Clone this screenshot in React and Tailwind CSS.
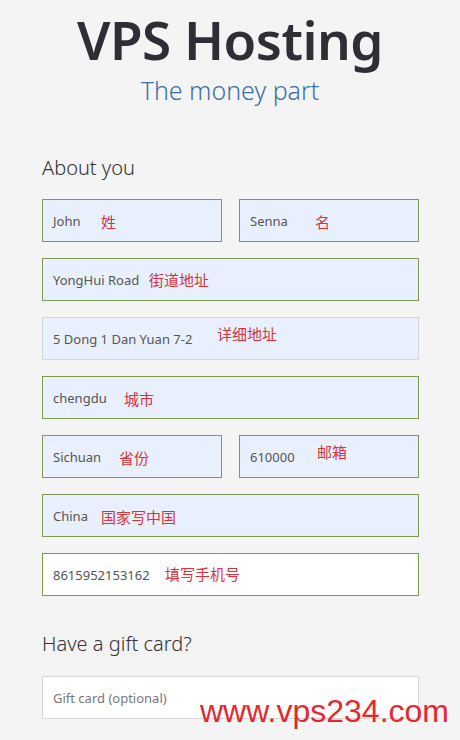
const fields = [
  [
    { value: 'John', note: '姓', left: 'left-[58px]', top: 'top-[11px]' },
    { value: 'Senna', note: '名', left: 'left-[75px]', top: 'top-[11px]' },
  ],
  [{ value: 'YongHui Road', note: '街道地址', left: 'left-[106px]', top: 'top-[10px]' }],
  [{ value: '5 Dong 1 Dan Yuan 7-2', note: '详细地址', left: 'left-[174px]', top: 'top-[5px]', plain: true }],
  [{ value: 'chengdu', note: '城市', left: 'left-[81px]', top: 'top-[11px]' }],
  [
    { value: 'Sichuan', note: '省份', left: 'left-[76px]', top: 'top-[11px]' },
    { value: '610000', note: '邮箱', left: 'left-[77px]', top: 'top-[5px]' },
  ],
  [{ value: 'China', note: '国家写中国', left: 'left-[58px]', top: 'top-[11px]' }],
  [{ value: '8615952153162', note: '填写手机号', left: 'left-[122px]', top: 'top-[9px]', white: true }],
];

function Field({ field }) {
  const box = field.white
    ? 'bg-white border-[#7c9a52]'
    : field.plain
    ? 'bg-[#e8f0fe] border-[#d6d6d6]'
    : 'bg-[#e8f0fe] border-[#7c9a52]';
  return (
    <div className={`relative flex-1 h-[43px] border ${box} flex items-center px-[10px]`}>
      <span className="text-[13px] text-[#555] pt-[2px]">{field.value}</span>
      <span
        className={`absolute ${field.left} ${field.top} text-[15px] text-[#d9343b] font-['Noto_Sans_CJK_SC',sans-serif]`}
      >
        {field.note}
      </span>
    </div>
  );
}

export default function App() {
  return (
    <div className="relative min-h-[740px] bg-[#f4f4f4] font-['Noto_Sans','Noto_Sans_CJK_SC',sans-serif] overflow-hidden">
      <header className="flex flex-col items-center pt-[6px]">
        <h1 className="text-[53px] leading-[68px] font-semibold tracking-[-0.5px] text-[#2e2f36]">VPS Hosting</h1>
        <p className="text-[25px] leading-[32px] font-light text-[#3e6fa6]">The money part</p>
      </header>

      <section className="pl-[42px] pr-[41px] pt-[49px]">
        <h2 className="text-[20px] leading-[26px] font-light text-[#333]">About you</h2>
        <div className="mt-[18px] flex flex-col gap-[16px]">
          {fields.map((row, i) => (
            <div key={i} className="flex gap-[17px]">
              {row.map((f) => (
                <Field key={f.value} field={f} />
              ))}
            </div>
          ))}
        </div>

        <h2 className="mt-[35px] text-[20px] leading-[26px] font-light text-[#333]">Have a gift card?</h2>
        <div className="mt-[19px] h-[43px] bg-white border border-[#d6d6d6] flex items-center px-[10px]">
          <span className="text-[13px] text-[#777] pt-[2px]">Gift card (optional)</span>
        </div>
      </section>

      <div className="absolute left-[200px] top-[690px] text-[32px] leading-[42px] text-[#e8262f] font-['Liberation_Sans',sans-serif]">
        www.vps234.com
      </div>
    </div>
  );
}
